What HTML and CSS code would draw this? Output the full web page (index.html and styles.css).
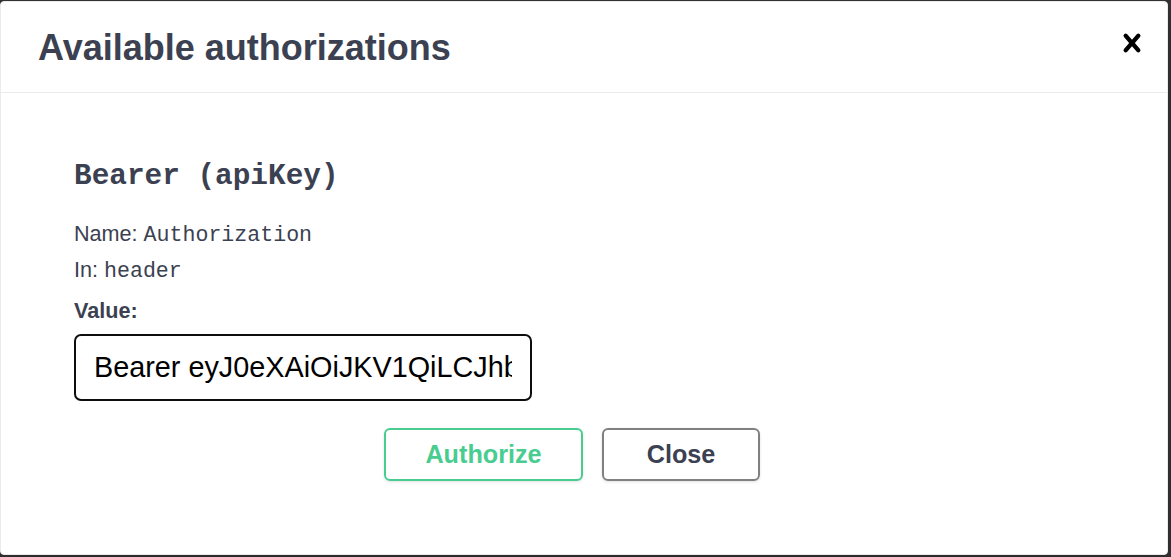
FILE: index.html
```html
<!DOCTYPE html>
<html lang="en">
<head>
<meta charset="utf-8">
<title>Available authorizations</title>
<link rel="stylesheet" href="styles.css">
</head>
<body>
<div class="modal">
  <div class="modal-header">
    <h3 class="modal-title">Available authorizations</h3>
    <button class="close-modal" aria-label="Close">
      <svg width="36" height="36" viewBox="0 0 20 20" aria-hidden="true"><path d="M14.348 14.849a1.2 1.2 0 0 1-1.697 0L10 11.819l-2.651 3.029a1.2 1.2 0 1 1-1.697-1.697l2.758-3.15-2.759-3.152a1.2 1.2 0 1 1 1.697-1.697L10 8.183l2.651-3.031a1.2 1.2 0 1 1 1.697 1.697l-2.758 3.152 2.758 3.15a1.2 1.2 0 0 1 0 1.698z"/></svg>
    </button>
  </div>
  <div class="modal-content">
    <h4 class="auth-title">Bearer (apiKey)</h4>
    <div class="row">Name: <code>Authorization</code></div>
    <div class="row">In: <code>header</code></div>
    <label class="row value-label" for="token">Value:</label>
    <input id="token" class="token-input" type="text" value="Bearer eyJ0eXAiOiJKV1QiLCJhbGciOiJIUzI1NiJ9.eyJzdWIiOiIxMjM0NTY3ODkwIn0">
    <div class="btn-wrapper">
      <button class="btn authorize">Authorize</button>
      <button class="btn done">Close</button>
    </div>
  </div>
</div>
</body>
</html>
```

FILE: styles.css
```css
html, body {
  margin: 0;
  padding: 0;
  height: 100%;
}
body {
  background: #333333;
  font-family: "Liberation Sans", Arial, sans-serif;
  color: #3b4151;
  overflow: hidden;
}
.modal {
  box-sizing: border-box;
  width: 1168px;
  height: 554px;
  margin-top: 1px;
  background: #fff;
  border: 1px solid #ebebeb;
  border-radius: 4px;
  box-shadow: 0 10px 30px rgba(0, 0, 0, 0.2);
}
.modal-header {
  box-sizing: border-box;
  height: 91px;
  display: flex;
  align-items: center;
  justify-content: space-between;
  padding: 0 17px 0 37px;
  border-bottom: 1px solid #ebebeb;
}
.modal-title {
  margin: 0;
  font-size: 36px;
  font-weight: 700;
  line-height: 40px;
  color: #3b4151;
  padding-top: 2px;
}
.close-modal {
  border: none;
  background: none;
  padding: 0;
  width: 36px;
  height: 36px;
  display: flex;
  margin-top: -8px;
}
.close-modal svg {
  fill: #000;
}
.modal-content {
  padding: 64px 36px 0 73px;
}
.auth-title {
  margin: 0 0 19px;
  font-family: "Liberation Mono", "Courier New", monospace;
  font-size: 29.4px;
  font-weight: 700;
  line-height: 40px;
  color: #3b4151;
}
.row {
  display: block;
  font-size: 21.6px;
  line-height: 36px;
  color: #3b4151;
}
.row code {
  font-family: "Liberation Mono", "Courier New", monospace;
  font-size: 21.6px;
  line-height: 1;
}
.value-label {
  font-weight: 700;
  margin-top: 5px;
}
.token-input {
  box-sizing: border-box;
  display: block;
  width: 458px;
  height: 67px;
  margin-top: 5px;
  padding: 0 18px;
  border: 2px solid #0d0d0d;
  border-radius: 7px;
  font-family: "Liberation Sans", Arial, sans-serif;
  font-size: 28.8px;
  color: #000;
  background: #fff;
  outline: none;
}
.btn-wrapper {
  display: flex;
  justify-content: center;
  gap: 19px;
  margin-top: 27px;
  padding-right: 61px;
}
.btn {
  box-sizing: border-box;
  height: 53px;
  border-radius: 6px;
  background: transparent;
  font-family: "Liberation Sans", Arial, sans-serif;
  font-size: 25.2px;
  font-weight: 700;
  box-shadow: 0 1px 3px rgba(0, 0, 0, 0.12);
  padding: 0;
}
.btn.authorize {
  width: 199px;
  border: 2px solid #49cc90;
  color: #49cc90;
}
.btn.done {
  width: 158px;
  border: 2px solid #808080;
  color: #3b4151;
}
```
